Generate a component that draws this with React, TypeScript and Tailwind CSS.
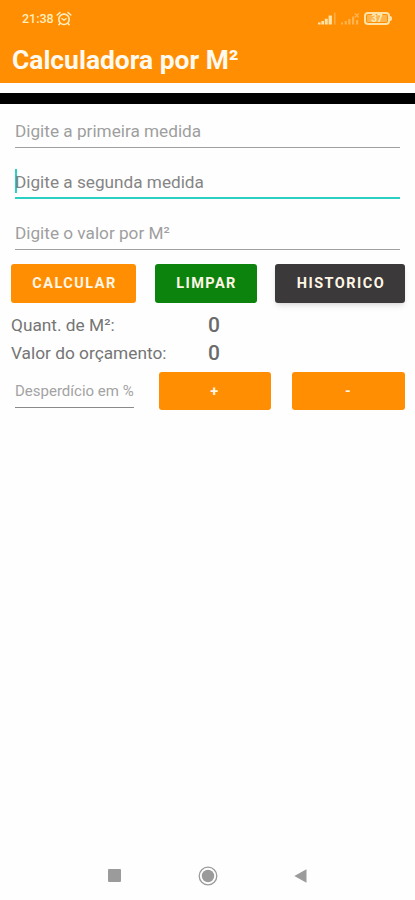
import React from 'react';

const fields = [
  { hint: 'Digite a primeira medida', focused: false },
  { hint: 'Digite a segunda medida', focused: true },
  { hint: 'Digite o valor por M²', focused: false },
];

const results = [
  { label: 'Quant. de M²:', value: '0' },
  { label: 'Valor do orçamento:', value: '0' },
];

const StatusBar = () => (
  <div className="flex h-[37px] items-center justify-between pl-[22px] pr-[23px] text-[#ffedbd]">
    <div className="flex items-center gap-[2px]">
      <span className="pt-px text-[12.5px] font-medium leading-none">21:38</span>
      <svg width="16" height="16" viewBox="0 0 16 16" fill="none" stroke="currentColor" strokeWidth="1.6" strokeLinecap="round">
        <circle cx="8" cy="8.3" r="5.2" />
        <path d="M1.2 4 4 1.5M12 1.5 14.8 4M3.9 12.5l-1 1.2M12.1 12.5l1 1.2" />
        <path d="M5.8 7.4 8 9.1l2.2-1.5" strokeWidth="1.3" />
      </svg>
    </div>
    <div className="flex items-center gap-[4px]">
      <svg width="19" height="13" viewBox="0 0 19 13" fill="currentColor">
        <path d="M0 10.5h2.6v2H0zM3.4 9h2.6v3.5H3.4zM6.8 6.8h2.9v5.7H6.8zM10.6 3.5h3.3v9h-3.3z" opacity=".9" />
        <path d="M16.2.5h1.2v12h-1.2z" opacity=".45" />
      </svg>
      <svg width="19" height="13" viewBox="0 0 19 13" fill="currentColor" opacity=".4">
        <path d="M0 10.5h2v2H0zM3.7 9h2.2v3.5H3.7zM7.2 7h2.3v5.5H7.2zM11 4.5h2.2v8H11zM15 8h2.2v4.5H15z" />
        <path d="m13.8 1.5 4 4m0-4-4 4" stroke="currentColor" strokeWidth="1.2" />
      </svg>
      <div className="flex items-center">
        <div className="flex h-[13px] w-[26px] items-center justify-center rounded-[4px] border-2 border-[#ffe3a6] p-px">
          <div className="flex h-full w-full items-center justify-center rounded-[1px] bg-[#ffb54d] text-[10px] font-bold leading-none">
            37
          </div>
        </div>
        <div className="h-[5px] w-[2px] rounded-r-full bg-[#ffe3a6]" />
      </div>
    </div>
  </div>
);

const Field = ({ hint, focused }: { hint: string; focused: boolean }) => (
  <div
    className={`flex h-[51px] items-end border-b ${
      focused ? 'border-b-2 border-[#2bcfc3] text-[#858585]' : 'border-[#a0a0a0] text-[#9e9e9e]'
    }`}
  >
    <div className="mb-[4px] flex h-[24px] items-center">
      {focused && <div className="-mr-[2px] h-[24px] w-[2px] bg-[#2bcfc3]" />}
      <span className={`whitespace-nowrap text-[17.2px] leading-[24px] ${focused ? 'pt-[2px]' : ''}`}>{hint}</span>
    </div>
  </div>
);

const Button = ({ className, children }: { className: string; children: React.ReactNode }) => (
  <button
    type="button"
    className={`flex items-center justify-center rounded-[3px] pt-px text-[14.5px] font-bold tracking-[1.45px] text-[#fff6e6] ${className}`}
  >
    {children}
  </button>
);

const App = () => {
  return (
    <div className="flex h-[900px] w-[415px] flex-col overflow-hidden bg-[#fefefe] font-[Roboto,sans-serif]">
      <header className="h-[83px] bg-[#ff8e03]">
        <StatusBar />
        <h1 className="pl-[12px] text-[26.4px] font-bold leading-[46px] text-[#fffaf0]">Calculadora por M²</h1>
      </header>
      <div className="mt-[10px] h-[11px] bg-black" />

      <main className="flex flex-1 flex-col">
        <div className="-mt-[7px] flex flex-col px-[15px]">
          {fields.map((field) => (
            <Field key={field.hint} hint={field.hint} focused={field.focused} />
          ))}
        </div>

        <div className="mt-[14px] flex justify-between pl-[11px] pr-[10px]">
          <Button className="h-[39px] w-[125px] bg-[#ff8e03] pl-[2px]">CALCULAR</Button>
          <Button className="h-[39px] w-[102px] bg-[#0b830d] pl-[2px]">LIMPAR</Button>
          <Button className="h-[39px] w-[130px] bg-[#3b393a] pl-[2px] shadow-md">HISTORICO</Button>
        </div>

        <div className="mt-[9px] flex flex-col pl-[11px]">
          {results.map((result) => (
            <div key={result.label} className="flex h-[28px] items-center text-[#757575]">
              <span className="w-[197px] whitespace-nowrap text-[17.3px]">{result.label}</span>
              <span className="pb-[2px] text-[21px] font-medium leading-none text-[#6b6b6b]">{result.value}</span>
            </div>
          ))}
        </div>

        <div className="mt-[4px] flex pl-[15px] pr-[10px]">
          <div className="mr-[25px] flex h-[36px] w-[119px] items-center border-b border-[#8a8a8a]">
            <span className="whitespace-nowrap pt-[4px] text-[15px] text-[#a3a3a3]">Desperdício em %</span>
          </div>
          <Button className="h-[38px] w-[112px] bg-[#ff8e03]">+</Button>
          <Button className="ml-auto h-[38px] w-[113px] bg-[#ff8e03]">-</Button>
        </div>
      </main>

      <nav className="flex h-[48px] items-center justify-between pb-px pl-[108px] pr-[108px] text-[#9b9b9b]">
        <svg width="13" height="13" viewBox="0 0 13 13" fill="currentColor">
          <rect width="13" height="13" rx="1" />
        </svg>
        <svg width="20" height="20" viewBox="0 0 20 20" fill="currentColor">
          <circle cx="10" cy="10" r="8.8" fill="none" stroke="currentColor" strokeWidth="1.3" />
          <circle cx="10" cy="10" r="6.2" />
        </svg>
        <svg width="13" height="14" viewBox="0 0 13 14" fill="currentColor">
          <path d="M12.5.3v13.4L.3 7z" />
        </svg>
      </nav>
    </div>
  );
};

export default App;
